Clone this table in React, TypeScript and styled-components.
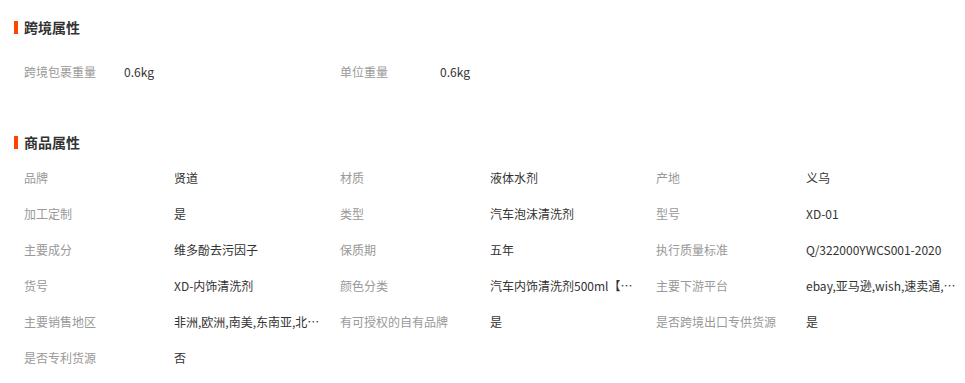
import React from "react";
import styled, { createGlobalStyle } from "styled-components";

const GlobalStyle = createGlobalStyle`
  html, body {
    margin: 0;
    padding: 0;
    background: #fff;
  }
  body {
    font-family: "Microsoft YaHei", "Noto Sans CJK SC", "Liberation Sans", sans-serif;
    font-size: 12px;
    color: #333;
  }
`;

const crossBorder = [
  { label: "跨境包裹重量", value: "0.6kg" },
  { label: "单位重量", value: "0.6kg" },
];

const productAttrs = [
  { label: "品牌", value: "贤道" },
  { label: "材质", value: "液体水剂" },
  { label: "产地", value: "义乌" },
  { label: "加工定制", value: "是" },
  { label: "类型", value: "汽车泡沫清洗剂" },
  { label: "型号", value: "XD-01" },
  { label: "主要成分", value: "维多酚去污因子" },
  { label: "保质期", value: "五年" },
  { label: "执行质量标准", value: "Q/322000YWCS001-2020" },
  { label: "货号", value: "XD-内饰清洗剂" },
  { label: "颜色分类", value: "汽车内饰清洗剂500ml【强力去污】" },
  { label: "主要下游平台", value: "ebay,亚马逊,wish,速卖通,独立站" },
  { label: "主要销售地区", value: "非洲,欧洲,南美,东南亚,北美,东北亚,中东" },
  { label: "有可授权的自有品牌", value: "是" },
  { label: "是否跨境出口专供货源", value: "是" },
  { label: "是否专利货源", value: "否" },
];

const Page = styled.div`
  padding: 0 0 0 14px;
  width: 965px;
  box-sizing: border-box;
`;

const Section = styled.section<{ $top: number }>`
  padding-top: ${(p) => p.$top}px;
`;

const SectionTitle = styled.h3<{ $gap: number }>`
  display: flex;
  align-items: center;
  height: 20px;
  margin: 0 0 ${(p) => p.$gap}px;
  font-size: 14px;
  font-weight: bold;
  color: #333;

  &::before {
    content: "";
    display: block;
    width: 4px;
    height: 13px;
    margin-right: 6px;
    background: #ff4400;
  }
`;

const AttrGrid = styled.div`
  display: grid;
  grid-template-columns: repeat(3, 316px);
  padding-left: 10px;
`;

const AttrItem = styled.div`
  display: flex;
  align-items: center;
  height: 36px;
`;

const AttrLabel = styled.span<{ $width: number }>`
  flex: none;
  width: ${(p) => p.$width}px;
  color: #999;
  white-space: nowrap;
`;

const AttrValue = styled.span`
  width: 150px;
  color: #333;
  white-space: nowrap;
  overflow: hidden;
  text-overflow: ellipsis;
`;

type Attr = { label: string; value: string };

const AttrList = ({ items, labelWidth }: { items: Attr[]; labelWidth: number }) => (
  <AttrGrid>
    {items.map((item) => (
      <AttrItem key={item.label}>
        <AttrLabel $width={labelWidth}>{item.label}</AttrLabel>
        <AttrValue title={item.value}>{item.value}</AttrValue>
      </AttrItem>
    ))}
  </AttrGrid>
);

export default function App() {
  return (
    <Page>
      <GlobalStyle />
      <Section $top={17}>
        <SectionTitle $gap={16}>跨境属性</SectionTitle>
        <AttrList items={crossBorder} labelWidth={100} />
      </Section>
      <Section $top={43}>
        <SectionTitle $gap={7}>商品属性</SectionTitle>
        <AttrList items={productAttrs} labelWidth={150} />
      </Section>
    </Page>
  );
}
